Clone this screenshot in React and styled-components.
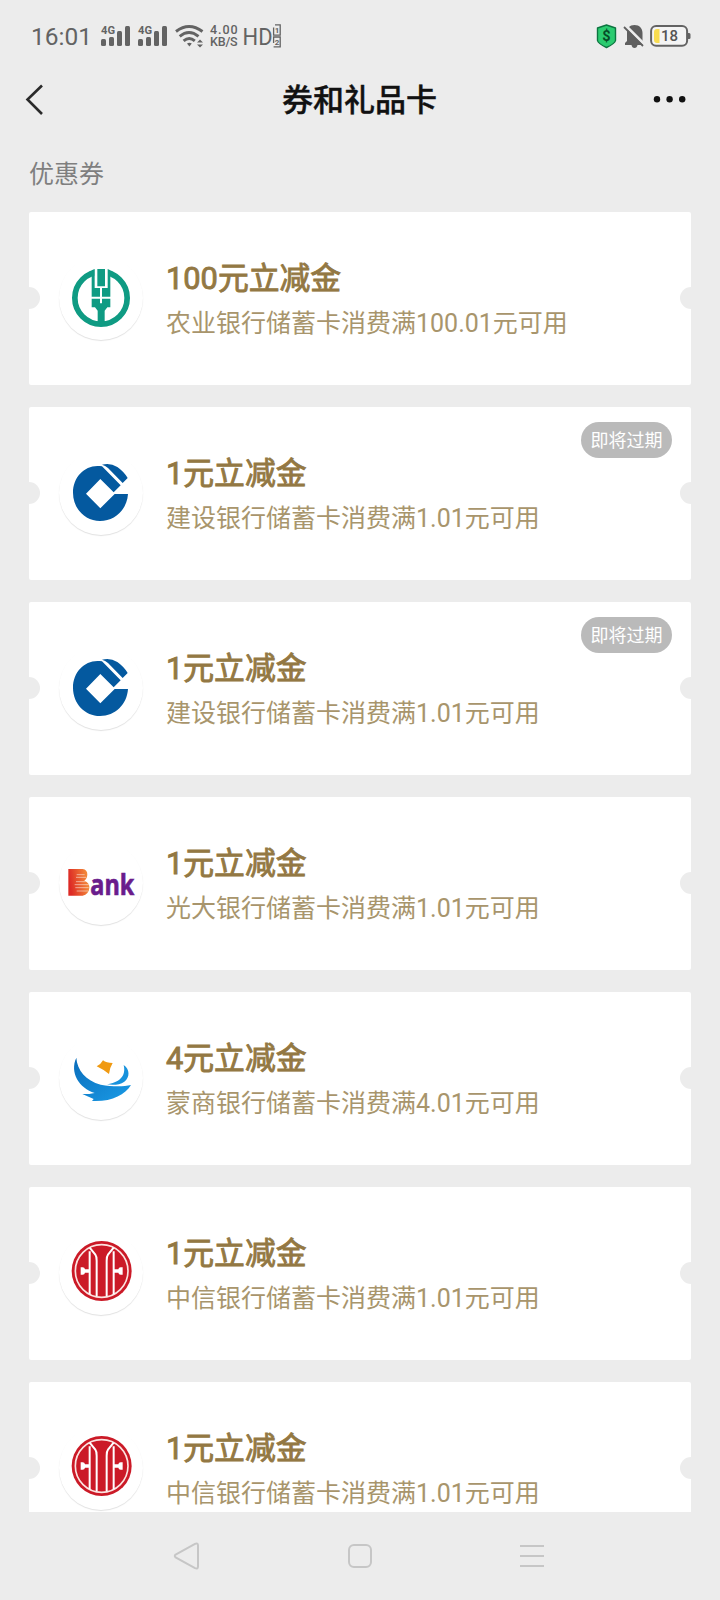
import React from 'react'
import styled, { createGlobalStyle } from 'styled-components'

const GlobalStyle = createGlobalStyle`
  body {
    margin: 0;
    background: #ececec;
    font-family: Roboto, 'Noto Sans CJK SC', sans-serif;
  }
`

const Screen = styled.div`
  width: 720px;
  height: 1600px;
  display: flex;
  flex-direction: column;
  overflow: hidden;
  background: #ececec;
`

const StatusBar = styled.div`
  height: 72px;
  flex-shrink: 0;
  display: flex;
  align-items: center;
  justify-content: space-between;
  padding: 0 29px 0 31px;
  box-sizing: border-box;
  color: #636363;
`

const StatusGroup = styled.div`
  display: flex;
  align-items: center;
`

const Time = styled.span`
  width: 70px;
  font-size: 24.5px;
  line-height: 28px;
  padding-top: 1px;
`

const StatusIcon = styled.svg`
  display: block;
  overflow: visible;
  margin-right: ${props => props.$gap || 0}px;
`

const Speed = styled.div`
  width: 33px;
  display: flex;
  flex-direction: column;
  font-size: 12.5px;
  font-weight: 500;
  line-height: 12px;
  white-space: nowrap;
`

const SpeedValue = styled.span`
  letter-spacing: 0.9px;
`

const SpeedUnit = styled.span`
  letter-spacing: -0.2px;
`

const Header = styled.header`
  height: 56px;
  flex-shrink: 0;
  display: flex;
  align-items: center;
  justify-content: space-between;
  padding: 0 34px 0 25px;
`

const HeaderTitle = styled.h1`
  margin: 0;
  font-size: 31px;
  font-weight: 500;
  line-height: 40px;
  color: #111;
  -webkit-text-stroke: 0.4px #111;
  padding: 2px 0 0 22px;
`

const SectionLabel = styled.div`
  height: 84px;
  flex-shrink: 0;
  padding: 28px 0 0 29px;
  box-sizing: border-box;
  font-size: 25px;
  line-height: 38px;
  color: #7f7f7f;
`

const List = styled.main`
  height: 1300px;
  flex-shrink: 0;
  display: flex;
  flex-direction: column;
  gap: 22px;
  padding: 0 29px;
  box-sizing: border-box;
  overflow: hidden;
`

const Card = styled.article`
  position: relative;
  height: 173px;
  flex-shrink: 0;
  display: flex;
  align-items: center;
  padding-left: 30px;
  box-sizing: border-box;
  border-radius: 2px;
  background: #fff;
  overflow: hidden;
`

const Notch = styled.i`
  position: absolute;
  top: 75px;
  ${props => props.$side}: -11px;
  width: 22px;
  height: 22px;
  border-radius: 50%;
  background: #ececec;
`

const Logo = styled.div`
  width: 84px;
  height: 84px;
  margin-bottom: 1px;
  border-radius: 50%;
  box-shadow: 0 1px 1px rgba(0, 0, 0, 0.12);

  svg {
    display: block;
  }
`

const Info = styled.div`
  padding: 4px 0 0 23px;
`

const Amount = styled.div`
  font-size: 30.8px;
  font-weight: 400;
  line-height: 46px;
  color: #937843;
  -webkit-text-stroke: 0.9px #937843;
`

const Rule = styled.div`
  font-size: 25px;
  line-height: 44px;
  color: #a8956c;
`

const Badge = styled.span`
  position: absolute;
  top: 15px;
  right: 19px;
  width: 91px;
  height: 36px;
  border-radius: 18px;
  background: #bababa;
  color: #fff;
  font-size: 18px;
  line-height: 38px;
  text-align: center;
`

const NavBar = styled.nav`
  height: 88px;
  flex-shrink: 0;
  display: flex;
  align-items: center;
  justify-content: space-between;
  padding: 0 174px 0 172px;
`

const Signal = () => (
  <StatusIcon width="29" height="22" viewBox="0 0 29 22" $gap={8} fill="#636363">
    <text x="0" y="9" fontSize="11" fontWeight="700" textLength="14" lengthAdjust="spacingAndGlyphs">4G</text>
    <rect x="0" y="14" width="5" height="7" rx="1.5" />
    <rect x="8" y="12" width="5" height="9" rx="1.5" />
    <rect x="16" y="6" width="5" height="15" rx="1.5" />
    <rect x="24" y="1" width="5" height="20" rx="1.5" />
  </StatusIcon>
)

const Wifi = () => (
  <StatusIcon width="29" height="24" viewBox="0 0 29 24" $gap={6} fill="none" stroke="#636363" strokeWidth="2.9">
    <path d="M1 7.5Q14 -2.5 27.5 7.5" />
    <path d="M4.7 12.3Q14 4.6 23.5 12.3" />
    <path d="M8.6 16.8Q14.2 12 19.8 16.8" />
    <path d="M12 19.6Q14.3 17.8 16.8 19.6L14.4 22.5z" fill="#636363" stroke="none" />
    <path d="M22 18.5L25 15.5L28 18.5zM22 20.5L25 23.5L28 20.5z" fill="#636363" stroke="none" />
  </StatusIcon>
)

const Hd = () => (
  <StatusIcon width="40" height="24" viewBox="0 0 40 24" fill="#636363">
    <text x="-0.5" y="20.5" fontSize="23.5" textLength="30" lengthAdjust="spacingAndGlyphs">HD</text>
    <g fill="none" stroke="#636363" strokeWidth="1.3">
      <path d="M32 0.8H37.2V11.2H30.6V3.5" />
      <path d="M30.6 19V13H37.2V22.8H30.6" />
    </g>
    <text x="34" y="9" fontSize="8" fontWeight="700" textAnchor="middle">1</text>
    <text x="34" y="20.8" fontSize="8" fontWeight="700" textAnchor="middle">2</text>
  </StatusIcon>
)

const Shield = () => (
  <StatusIcon width="21" height="25" viewBox="0 0 21 25" $gap={7}>
    <path d="M10.5 1L19.5 4V16.5Q19 19.5 10.5 23.5Q2 19.5 1.5 16.5V4z" fill="#2bcb70" stroke="#0c7540" strokeWidth="1.4" strokeLinejoin="round" />
    <text x="10.5" y="17.3" fontSize="14.5" fontWeight="700" textAnchor="middle" fill="#064c28">$</text>
  </StatusIcon>
)

const Bell = () => (
  <StatusIcon width="21" height="25" viewBox="0 0 21 25" $gap={5}>
    <path d="M10.5 1C15.5 1 18.5 4.5 18.5 9V17L20 19V21H1V19L3 17V9C3 4.5 5.5 1 10.5 1zM7.5 21H13.5Q13 24 10.5 24Q8 24 7.5 21z" fill="#5f5f5f" />
    <path d="M1.5 1.5L21 21" stroke="#ececec" strokeWidth="3" />
    <path d="M0 3L19 22" stroke="#5f5f5f" strokeWidth="1.8" />
  </StatusIcon>
)

const Battery = () => (
  <StatusIcon width="41" height="22" viewBox="0 0 41 22">
    <rect x="1.1" y="1.1" width="36" height="19.6" rx="5" fill="#f4f4f4" stroke="#636363" strokeWidth="2" />
    <path d="M38 8h1.2q1.3 0 1.3 1.5v3q0 1.5 -1.3 1.5H38z" fill="#636363" />
    <path d="M9.5 4V18H7Q4 18 4 15V7Q4 4 7 4z" fill="#f8dc4f" />
    <text x="19.5" y="16.2" fontSize="15" fontWeight="500" textAnchor="middle" fill="#555">18</text>
  </StatusIcon>
)

const AbcLogo = () => (
  <svg width="84" height="84" viewBox="117 168 252 252">
    <circle cx="243" cy="294" r="78.5" fill="none" stroke="#0f9b83" strokeWidth="17" />
    <path d="M223 200H264V260H223z" fill="#fff" />
    <g fill="#0f9b83">
      <path d="M232 207H255V259H232z" />
      <path d="M215 211L224 207V264H240V290H215z" />
      <path d="M271 211L263 207V264H246V290H271z" />
      <path d="M215 296H240V310H246V296H271V322H262L254 332V376H233V332L225 322H215z" />
    </g>
  </svg>
)

const CcbLogo = () => (
  <svg width="84" height="84" viewBox="117 153 252 252">
    <path
      fill="#04599f"
      d="M246 199C200 190 159 227 159 278C159 326 195 363 240 363C286 363 321 328 324 282H284L241 325L198 281L241 237L281 277L302 256z"
    />
    <path fill="#04599f" d="M246 194Q270 187 292 201Q312 215 323 234L308 249L264 204Q256 197 246 194z" />
  </svg>
)

const EverbrightLogo = () => (
  <svg width="84" height="84" viewBox="27 33 252 252">
    <defs>
      <linearGradient id="flame" x1="0" x2="1" y1="0.2" y2="0">
        <stop offset="0" stopColor="#dd2a25" />
        <stop offset="1" stopColor="#f79a3c" />
      </linearGradient>
    </defs>
    <path fill="url(#flame)" d="M55 117H98Q112 119 112 133Q112 146 103 152Q119 158 118 174Q116 193 98 197H55z" />
    <path d="M80 134H104M78 142H108M78 155H106M74 164H116M76 173H116M80 183H114" stroke="#fff" strokeOpacity="0.5" strokeWidth="3" />
    <text
      x="121"
      y="196"
      fontFamily="'Open Sans', sans-serif"
      fontSize="84"
      fontWeight="700"
      fill="#6a1c8c"
      stroke="#6a1c8c"
      strokeWidth="2"
      textLength="132"
      lengthAdjust="spacingAndGlyphs"
    >
      ank
    </text>
  </svg>
)

const MengshangLogo = () => (
  <svg width="84" height="84" viewBox="27 48 252 252">
    <defs>
      <linearGradient id="wing" x1="0" x2="1" y1="0" y2="1">
        <stop offset="0" stopColor="#0a6dbb" />
        <stop offset="1" stopColor="#1a9be6" />
      </linearGradient>
    </defs>
    <path
      fill="url(#wing)"
      d="M79 113C81 150 108 182 152 194C186 200 218 201 243 195C224 225 184 246 126 243L131 237L97 222H118Q124 221 134 219C88 204 58 158 79 113z"
    />
    <path fill="#1792dc" d="M221 135C240 148 240 172 223 185C209 195 188 196 171 193C204 188 230 171 221 135z" />
    <path fill="#f09a12" d="M159 121Q169 129 188 129Q179 143 177 162Q163 150 140 139Q152 134 159 121z" />
  </svg>
)

const CiticLogo = () => (
  <svg width="84" height="84" viewBox="27 33 252 252">
    <circle cx="155" cy="153" r="90" fill="#cb1a27" />
    <circle cx="155" cy="153" r="79" fill="none" stroke="#fbe3e0" strokeWidth="5" />
    <g fill="none" stroke="#fff" strokeWidth="6">
      <path d="M119 94V223" />
      <path d="M191 94V223" />
      <path d="M119 83L136 104Q140 109 140 122V229" />
      <path d="M191 83L174 104Q170 109 170 122V229" />
    </g>
    <g fill="#fff">
      <path d="M92 142H98Q104 142 105 148H119V158H105Q104 164 98 164H92z" />
      <path d="M218 142H212Q206 142 205 148H191V158H205Q206 164 212 164H218z" />
    </g>
  </svg>
)

const coupons = [
  { logo: AbcLogo, amount: '100元立减金', rule: '农业银行储蓄卡消费满100.01元可用' },
  { logo: CcbLogo, amount: '1元立减金', rule: '建设银行储蓄卡消费满1.01元可用', expiring: true },
  { logo: CcbLogo, amount: '1元立减金', rule: '建设银行储蓄卡消费满1.01元可用', expiring: true },
  { logo: EverbrightLogo, amount: '1元立减金', rule: '光大银行储蓄卡消费满1.01元可用' },
  { logo: MengshangLogo, amount: '4元立减金', rule: '蒙商银行储蓄卡消费满4.01元可用' },
  { logo: CiticLogo, amount: '1元立减金', rule: '中信银行储蓄卡消费满1.01元可用' },
  { logo: CiticLogo, amount: '1元立减金', rule: '中信银行储蓄卡消费满1.01元可用' }
]

const Coupon = ({ logo: BankLogo, amount, rule, expiring }) => (
  <Card>
    <Notch $side="left" />
    <Notch $side="right" />
    <Logo>
      <BankLogo />
    </Logo>
    <Info>
      <Amount>{amount}</Amount>
      <Rule>{rule}</Rule>
    </Info>
    {expiring && <Badge>即将过期</Badge>}
  </Card>
)

const App = () => (
  <Screen>
    <GlobalStyle />
    <StatusBar>
      <StatusGroup>
        <Time>16:01</Time>
        <Signal />
        <Signal />
        <Wifi />
        <Speed>
          <SpeedValue>4.00</SpeedValue>
          <SpeedUnit>KB/S</SpeedUnit>
        </Speed>
        <Hd />
      </StatusGroup>
      <StatusGroup>
        <Shield />
        <Bell />
        <Battery />
      </StatusGroup>
    </StatusBar>
    <Header>
      <svg width="20" height="32" viewBox="0 0 20 32" fill="none" stroke="#2a2a2a" strokeWidth="2.6">
        <path d="M17 1.5L2.5 15.5L17 30" />
      </svg>
      <HeaderTitle>券和礼品卡</HeaderTitle>
      <svg width="34" height="10" viewBox="0 0 34 10" fill="#111">
        <circle cx="5" cy="4.3" r="3.2" />
        <circle cx="17.6" cy="4.3" r="3.2" />
        <circle cx="30.2" cy="4.3" r="3.2" />
      </svg>
    </Header>
    <SectionLabel>优惠券</SectionLabel>
    <List>
      {coupons.map((coupon, i) => (
        <Coupon key={i} {...coupon} />
      ))}
    </List>
    <NavBar>
      <svg width="28" height="30" viewBox="0 0 28 30" fill="none" stroke="#c6c6c6" strokeWidth="2">
        <path d="M3.6 13.6L23 2.9Q26 1.6 26 4.4V25.6Q26 28.4 23 27.1L3.6 16.4Q2 15 3.6 13.6z" />
      </svg>
      <svg width="26" height="26" viewBox="0 0 26 26" fill="none" stroke="#c6c6c6" strokeWidth="2">
        <rect x="2" y="2" width="22" height="22" rx="5" />
      </svg>
      <svg width="26" height="24" viewBox="0 0 26 24" stroke="#c6c6c6" strokeWidth="2">
        <path d="M0 2H24M0 12H24M0 22H24" />
      </svg>
    </NavBar>
  </Screen>
)

export default App
